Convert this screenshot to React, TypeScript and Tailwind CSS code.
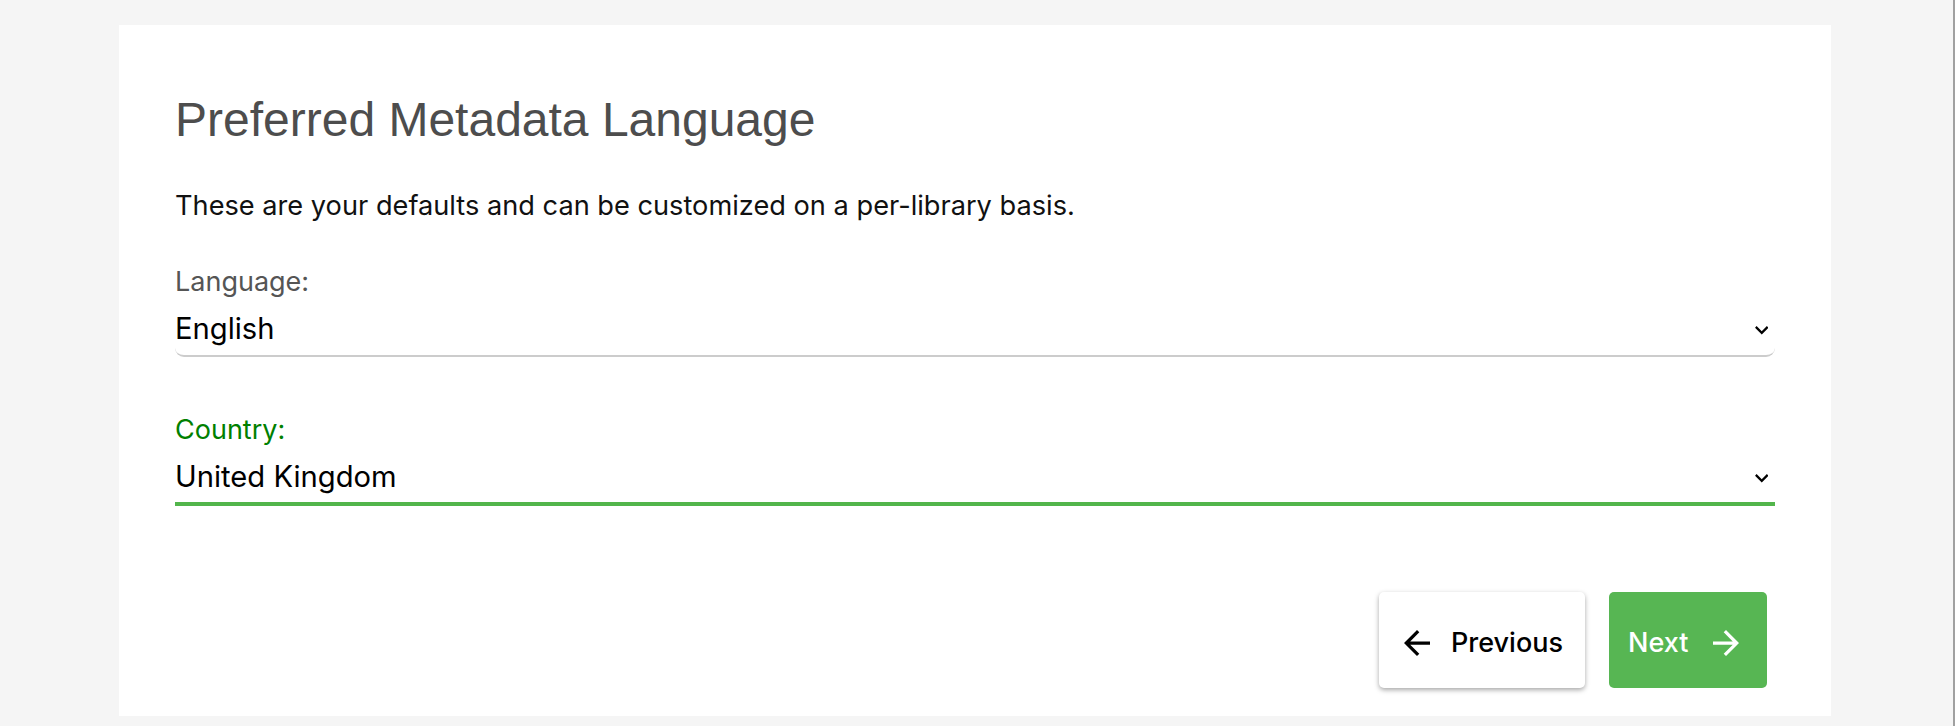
import React from "react";

const sans = { fontFamily: "Inter, 'Noto Sans', sans-serif" };

function Chevron() {
  return (
    <svg width="13.5" height="8.5" viewBox="6 8.5 12 7.6" className="block">
      <path d="M7.41 8.59L12 13.17l4.59-4.58L18 10l-6 6-6-6 1.41-1.41z" fill="#000" />
    </svg>
  );
}

function ArrowBack({ color }: { color: string }) {
  return (
    <svg width="26" height="26" viewBox="4 4 16 16" className="block shrink-0">
      <path d="M20 11H7.83l5.59-5.59L12 4l-8 8 8 8 1.41-1.41L7.83 13H20v-2z" fill={color} />
    </svg>
  );
}

function ArrowForward({ color }: { color: string }) {
  return (
    <svg width="26" height="26" viewBox="4 4 16 16" className="block shrink-0">
      <path d="M12 4l-1.41 1.41L16.17 11H4v2h12.17l-5.58 5.59L12 20l8-8z" fill={color} />
    </svg>
  );
}

export default function App() {
  return (
    <div className="w-[1955px] h-[726px] bg-[#f5f5f5] border-r-2 border-[#a0a0a0] overflow-hidden">
      <div className="pt-[25px] pl-[119px]">
        <div className="w-[1712px] h-[691px] bg-white pt-[67px] pl-[56px] pr-[56px]">
          <h1
            className="text-[48px] leading-[56px] font-normal text-[#4d4d4d] m-0"
            style={{ fontFamily: "'Liberation Sans', Arial, sans-serif" }}
          >
            Preferred Metadata Language
          </h1>
          <p className="mt-[40px] text-[27.2px] leading-[36px] text-[#111]" style={sans}>
            These are your defaults and can be customized on a per-library basis.
          </p>

          <div className="mt-[43px]" style={sans}>
            <label className="block text-[27px] leading-[29px] text-[#555] mb-[3px]">Language:</label>
            <div className="flex items-start h-[58px] bg-white rounded-[9px] border-b-2 border-[#cccccc]">
              <div className="pt-[12px] text-[29.2px] leading-[36px] text-black">English</div>
              <div className="ml-auto mt-[27px] mr-[7px]">
                <Chevron />
              </div>
            </div>
          </div>

          <div className="mt-[58px]" style={sans}>
            <label className="block text-[27px] leading-[29px] text-[#008000] mb-[3px]">Country:</label>
            <div className="flex items-start h-[59px] bg-white rounded-t-[9px] border-b-4 border-[#52b54b]">
              <div className="pt-[12px] text-[29.2px] leading-[36px] text-black">United Kingdom</div>
              <div className="ml-auto mt-[27px] mr-[7px]">
                <Chevron />
              </div>
            </div>
          </div>

          <div className="mt-[86px] flex justify-end gap-[24px] mr-[8px]" style={sans}>
            <button className="w-[206px] h-[96px] rounded-[5px] bg-white shadow-[0_2px_5px_rgba(0,0,0,0.35)] flex items-center pt-[6px] pl-[25px] gap-[21px] text-[27px] font-medium text-black">
              <ArrowBack color="#000" />
              <span>Previous</span>
            </button>
            <button className="w-[158px] h-[96px] rounded-[5px] bg-[#57b653] flex items-center pt-[6px] pl-[19px] gap-[25px] text-[27px] font-medium text-white">
              <span>Next</span>
              <ArrowForward color="#fff" />
            </button>
          </div>
        </div>
      </div>
    </div>
  );
}
